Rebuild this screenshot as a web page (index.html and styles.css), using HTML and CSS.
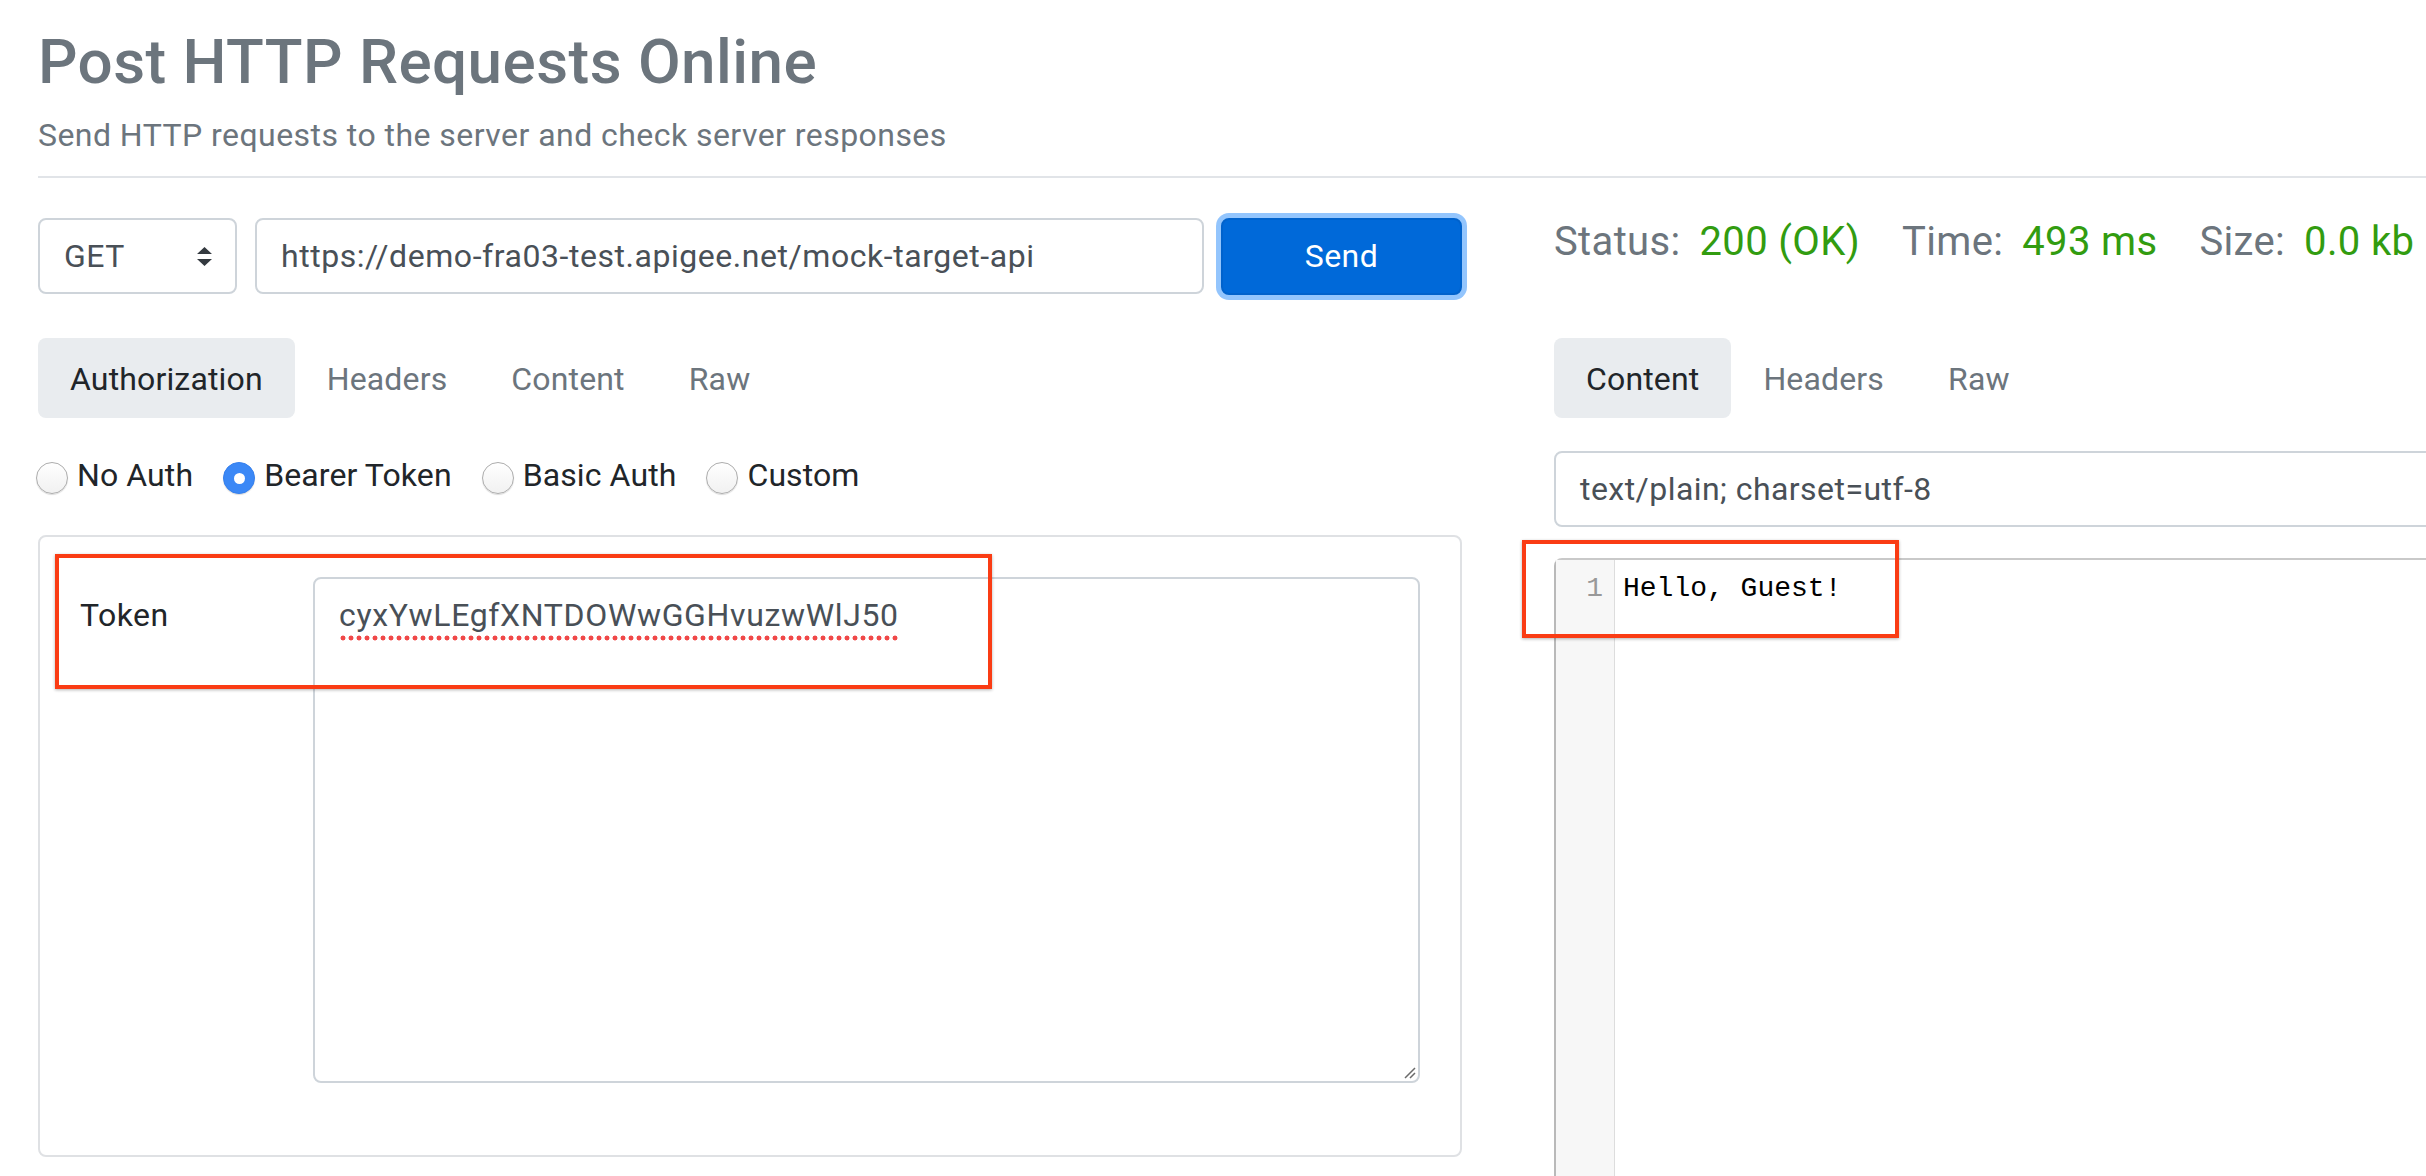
FILE: index.html
```html
<!DOCTYPE html>
<html lang="en">
<head>
<meta charset="utf-8">
<title>Post HTTP Requests Online</title>
<link rel="stylesheet" href="styles.css">
</head>
<body>
<div class="page">
  <header class="header">
    <h1 class="title">Post HTTP Requests Online</h1>
    <p class="lead">Send HTTP requests to the server and check server responses</p>
  </header>
  <hr class="divider">
  <div class="columns">
    <section class="col">
      <div class="request-bar">
        <div class="select">
          <span>GET</span>
          <svg class="select-arrows" width="15" height="19" viewBox="0 0 15 19"><path d="M7.5 0L15 7H0z M0 12H15L7.5 19z" fill="#343a40"/></svg>
        </div>
        <div class="url">https://demo-fra03-test.apigee.net/mock-target-api</div>
        <button class="send">Send</button>
      </div>
      <nav class="tabs">
        <span class="tab active">Authorization</span>
        <span class="tab">Headers</span>
        <span class="tab">Content</span>
        <span class="tab">Raw</span>
      </nav>
      <div class="radios">
        <label class="radio"><span class="dot"></span>No Auth</label>
        <label class="radio"><span class="dot checked"></span>Bearer Token</label>
        <label class="radio"><span class="dot"></span>Basic Auth</label>
        <label class="radio"><span class="dot"></span>Custom</label>
      </div>
      <div class="card">
        <div class="annot annot-left"></div>
        <div class="form-row">
          <div class="label">Token</div>
          <div class="textarea">
            <span class="token">cyxYwLEgfXNTDOWwGGHvuzwWlJ50</span>
            <svg class="grip" width="14" height="14" viewBox="0 0 14 14"><path d="M13 3L3 13M13 8L8 13" stroke="#6b6b6b" stroke-width="1.5" fill="none"/></svg>
          </div>
        </div>
      </div>
    </section>
    <section class="col">
      <div class="status">
        <span class="stat"><span class="stat-label">Status:</span><span class="stat-value">200 (OK)</span></span>
        <span class="stat"><span class="stat-label">Time:</span><span class="stat-value">493 ms</span></span>
        <span class="stat"><span class="stat-label">Size:</span><span class="stat-value">0.0 kb</span></span>
      </div>
      <nav class="tabs">
        <span class="tab active">Content</span>
        <span class="tab">Headers</span>
        <span class="tab">Raw</span>
      </nav>
      <div class="ctype">text/plain; charset=utf-8</div>
      <div class="editor">
        <div class="annot annot-right"></div>
        <div class="gutter">1</div>
        <div class="code">Hello, Guest!</div>
      </div>
    </section>
  </div>
</div>
</body>
</html>
```

FILE: styles.css
```css
html, body {
  margin: 0;
  height: 1176px;
  overflow: hidden;
  background: #fff;
}
body {
  font-family: Roboto, "Liberation Sans", Arial, sans-serif;
  font-size: 32px;
  line-height: 48px;
  letter-spacing: 0.45px;
  color: #212529;
}
.page {
  width: 2980px;
  padding-left: 38px;
}
.title {
  margin: 25px 0 0;
  font-size: 62px;
  line-height: 74px;
  font-weight: 500;
  color: #6c757d;
}
.lead {
  margin: 12px 0 0;
  color: #6c757d;
}
.divider {
  margin: 17px 0 0;
  height: 0;
  border: 0;
  border-top: 2px solid #e1e4e8;
}
.columns {
  display: flex;
  gap: 92px;
  margin-top: 40px;
}
.col {
  flex: none;
  width: 1424px;
}
.request-bar {
  display: flex;
  align-items: center;
  height: 76px;
}
.select {
  box-sizing: border-box;
  width: 199px;
  height: 76px;
  border: 2px solid #ced4da;
  border-radius: 8px;
  padding: 0 23px 0 24px;
  display: flex;
  align-items: center;
  justify-content: space-between;
  color: #495057;
}
.url {
  box-sizing: border-box;
  flex: 1;
  height: 76px;
  margin: 0 17px 0 18px;
  border: 2px solid #ced4da;
  border-radius: 8px;
  padding: 0 24px;
  display: flex;
  align-items: center;
  color: #495057;
  letter-spacing: 0.55px;
}
.send {
  box-sizing: border-box;
  width: 241px;
  height: 77px;
  background: #0069d9;
  border: 2px solid #0062cc;
  border-radius: 8px;
  color: #fff;
  font: inherit;
  letter-spacing: inherit;
  box-shadow: 0 0 0 5px #93c5fd;
  padding: 0;
}
.tabs {
  display: flex;
  margin-top: 44px;
  letter-spacing: 0.15px;
}
.tab {
  padding: 17px 32px 15px;
  border-radius: 8px;
  color: #6c757d;
}
.tab.active {
  background: #e9ecef;
  color: #212529;
}
.radios {
  display: flex;
  align-items: center;
  height: 48px;
  margin: 33px 0 0 -2px;
  letter-spacing: 0.1px;
}
.radio {
  display: flex;
  align-items: center;
  margin-right: 30px;
}
.dot {
  box-sizing: border-box;
  width: 32px;
  height: 32px;
  margin: 6px 9px 0 0;
  border-radius: 50%;
  border: 1px solid #adadad;
  background: linear-gradient(#ffffff, #f1f1f1);
  box-shadow: 0 1px 1px rgba(0, 0, 0, 0.14);
  display: flex;
  align-items: center;
  justify-content: center;
}
.dot.checked {
  background: #3b88f6;
  border-color: #3580ee;
}
.dot.checked::after {
  content: "";
  width: 11px;
  height: 11px;
  border-radius: 50%;
  background: #fff;
}
.card {
  position: relative;
  margin-top: 36px;
  border: 2px solid #dfe1e4;
  border-radius: 8px;
  padding: 40px 40px 72px;
}
.form-row {
  display: grid;
  grid-template-columns: 233px 1fr;
}
.label {
  padding-top: 14px;
}
.textarea {
  position: relative;
  box-sizing: border-box;
  height: 506px;
  border: 2px solid #ced4da;
  border-radius: 8px;
  padding: 12px 24px;
  color: #495057;
}
.token {
  letter-spacing: 0.65px;
  padding-bottom: 7px;
  background-image: radial-gradient(circle, #f04848 2.1px, rgba(240, 72, 72, 0) 2.8px);
  background-size: 8px 6px;
  background-repeat: repeat-x;
  background-position: 0 100%;
}
.grip {
  position: absolute;
  right: 2px;
  bottom: 2px;
}
.annot {
  position: absolute;
  box-sizing: border-box;
  border: 4px solid #fa3c14;
  box-shadow: 0 1px 3px rgba(0, 0, 0, 0.3);
  z-index: 2;
}
.annot-left {
  left: 15px;
  top: 17px;
  width: 937px;
  height: 135px;
}
.status {
  display: flex;
  height: 76px;
  font-size: 40px;
  line-height: 48px;
  gap: 42px;
  letter-spacing: 0.35px;
}
.stat-label {
  color: #6c757d;
  margin-right: 19px;
}
.stat-value {
  color: #329c10;
}
.ctype {
  box-sizing: border-box;
  height: 76px;
  margin-top: 33px;
  border: 2px solid #ced4da;
  border-radius: 8px;
  padding: 0 24px;
  display: flex;
  align-items: center;
  color: #495057;
}
.editor {
  position: relative;
  display: flex;
  height: 700px;
  margin-top: 31px;
  border-top: 2px solid #c9c9c9;
  border-left: 2px solid #b9b9b9;
  border-top-left-radius: 8px;
  font-family: "Liberation Mono", "DejaVu Sans Mono", monospace;
  font-size: 28px;
  line-height: 32px;
  letter-spacing: 0;
}
.gutter {
  box-sizing: border-box;
  width: 59px;
  padding: 13px 11px 0 0;
  background: #f7f7f7;
  border-right: 1px solid #dddddd;
  text-align: right;
  color: #999;
}
.code {
  padding: 13px 0 0 8px;
  color: #000;
}
.annot-right {
  left: -34px;
  top: -20px;
  width: 377px;
  height: 98px;
}
```
